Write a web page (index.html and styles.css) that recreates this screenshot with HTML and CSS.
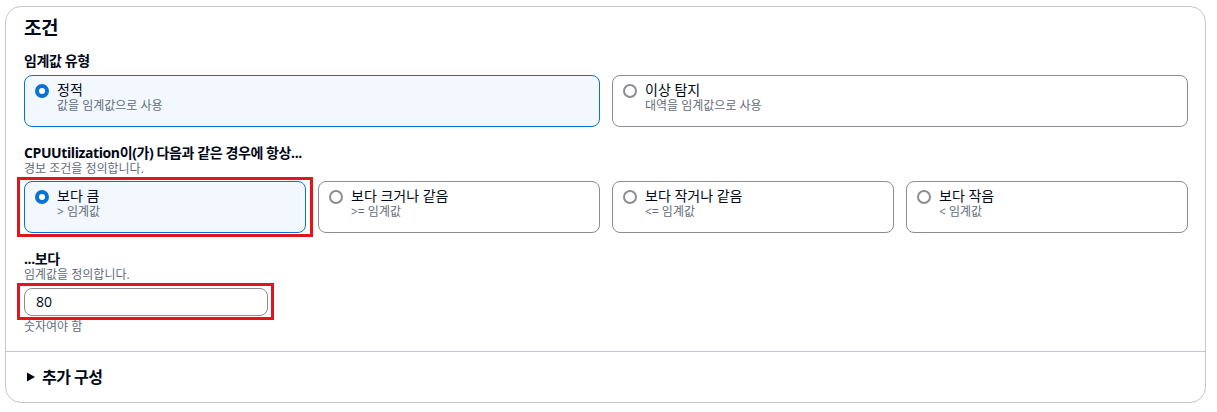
FILE: index.html
```html
<!DOCTYPE html>
<html lang="ko">
<head>
<meta charset="utf-8">
<title>조건</title>
<link rel="stylesheet" href="styles.css">
</head>
<body>
<div class="panel">
  <div class="body">
    <h2 class="title">조건</h2>

    <div class="field f1">
      <div class="label">임계값 유형</div>
      <div class="tiles two">
        <div class="tile selected">
          <span class="radio on"></span>
          <div class="tile-text">
            <div class="tile-title">정적</div>
            <div class="tile-desc">값을 임계값으로 사용</div>
          </div>
        </div>
        <div class="tile">
          <span class="radio"></span>
          <div class="tile-text">
            <div class="tile-title">이상 탐지</div>
            <div class="tile-desc">대역을 임계값으로 사용</div>
          </div>
        </div>
      </div>
    </div>

    <div class="field f2">
      <div class="label">CPUUtilization이(가) 다음과 같은 경우에 항상...</div>
      <div class="desc">경보 조건을 정의합니다.</div>
      <div class="tiles four">
        <div class="tile selected highlight">
          <span class="radio on"></span>
          <div class="tile-text">
            <div class="tile-title">보다 큼</div>
            <div class="tile-desc">&gt; 임계값</div>
          </div>
        </div>
        <div class="tile">
          <span class="radio"></span>
          <div class="tile-text">
            <div class="tile-title">보다 크거나 같음</div>
            <div class="tile-desc">&gt;= 임계값</div>
          </div>
        </div>
        <div class="tile">
          <span class="radio"></span>
          <div class="tile-text">
            <div class="tile-title">보다 작거나 같음</div>
            <div class="tile-desc">&lt;= 임계값</div>
          </div>
        </div>
        <div class="tile">
          <span class="radio"></span>
          <div class="tile-text">
            <div class="tile-title">보다 작음</div>
            <div class="tile-desc">&lt; 임계값</div>
          </div>
        </div>
      </div>
    </div>

    <div class="field f3">
      <div class="label">...보다</div>
      <div class="desc">임계값을 정의합니다.</div>
      <div class="input highlight">80</div>
      <div class="hint">숫자여야 함</div>
    </div>
  </div>
  <div class="footer">
    <svg class="caret" width="8" height="10" viewBox="0 0 8 10"><path d="M0 0.5 L8 5 L0 9.5 Z" fill="#000716"/></svg>
    <span class="footer-label">추가 구성</span>
  </div>
</div>
</body>
</html>
```

FILE: styles.css
```css
* { box-sizing: border-box; }
html, body { margin: 0; padding: 0; background: #ffffff; }
body {
  font-family: "Open Sans", "Noto Sans CJK KR", sans-serif;
  color: #000716;
  font-size: 14px;
  padding: 6px 10px 0 5px;
}
.panel {
  width: 1201px;
  height: 397px;
  border: 1px solid #c6c6cd;
  border-radius: 16px;
  display: flex;
  flex-direction: column;
}
.body {
  padding: 10px 17px 0 18px;
  height: 345px;
  border-bottom: 1px solid #c6c6cd;
}
.title {
  margin: 0;
  font-size: 19px;
  line-height: 22px;
  font-weight: 700;
  letter-spacing: -0.5px;
}
.field.f1 { margin-top: 13px; }
.field.f2 { margin-top: 18px; }
.field.f3 { margin-top: 18px; }
.label {
  font-size: 14px;
  line-height: 18px;
  font-weight: 700;
  letter-spacing: -0.4px;
}
.f2 .label, .f3 .label { line-height: 16px; }
.desc, .hint {
  font-size: 12px;
  line-height: 14px;
  color: #5f6b7a;
}
.desc { margin-top: 1px; }
.tiles { display: grid; gap: 12px; }
.tiles.two { grid-template-columns: 1fr 1fr; margin-top: 5px; }
.tiles.four { grid-template-columns: repeat(4, 1fr); margin-top: 5px; }
.tile {
  height: 52px;
  border: 1px solid #8c8c94;
  border-radius: 8px;
  padding: 6px 10px 0 10px;
  display: flex;
  gap: 8px;
  align-items: flex-start;
}
.tile.selected {
  border-color: #0972d3;
  background: #f2f8fd;
}
.highlight { position: relative; }
.highlight::after {
  content: "";
  position: absolute;
  top: -5px;
  bottom: -5px;
  left: -8px;
  right: -8px;
  border: 3px solid #e3141b;
  pointer-events: none;
}
.input.highlight::after {
  top: -6px;
  bottom: -5px;
  left: -8px;
  right: -7px;
}
.radio {
  flex: none;
  width: 14px;
  height: 14px;
  margin-top: 2px;
  border-radius: 50%;
  border: 2px solid #8c8c94;
  background: #fff;
}
.radio.on {
  border: 4px solid #0972d3;
}
.tile-title { font-size: 14px; line-height: 16px; }
.tile-desc { font-size: 12px; line-height: 16px; color: #5f6b7a; }
.input {
  margin-top: 6px;
  width: 244px;
  height: 28px;
  border: 1px solid #8c8c94;
  border-radius: 8px;
  padding: 0 11px;
  font-size: 14px;
  line-height: 26px;
}
.hint { margin-top: 3px; line-height: 16px; }
.footer {
  flex: 1;
  display: flex;
  align-items: center;
  gap: 7px;
  padding: 0 0 0 21px;
}
.caret { display: block; }
.footer-label { font-size: 16px; font-weight: 700; line-height: 18px; letter-spacing: -0.5px; }
```
